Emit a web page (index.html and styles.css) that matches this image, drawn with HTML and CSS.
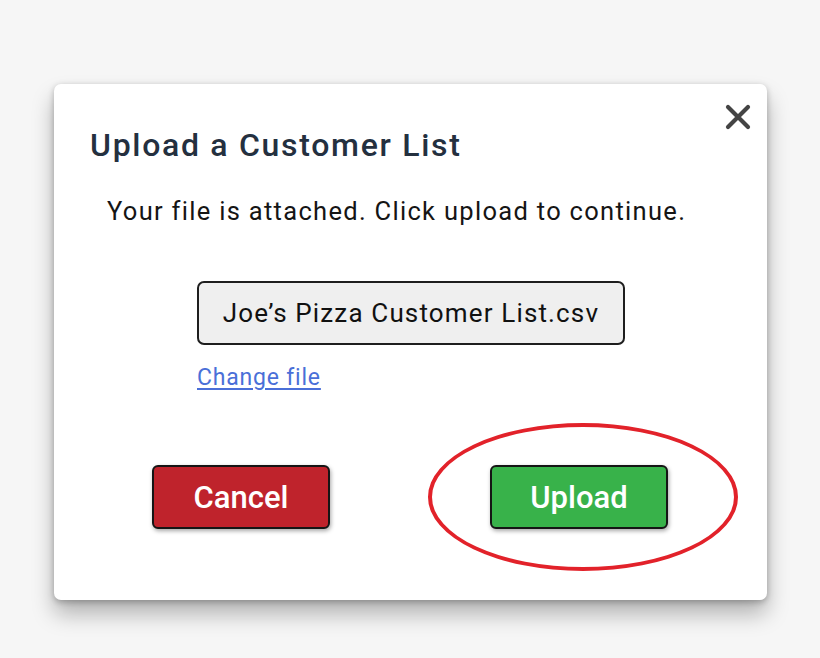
FILE: index.html
```html
<!DOCTYPE html>
<html lang="en">
<head>
<meta charset="utf-8">
<title>Upload a Customer List</title>
<link rel="stylesheet" href="styles.css">
</head>
<body>
<div class="modal">
  <button class="close" aria-label="Close">
    <svg width="28" height="28" viewBox="0 0 28 28"><path d="M4 4 L24 24 M24 4 L4 24" stroke="#444" stroke-width="4.2" stroke-linecap="round" fill="none"/></svg>
  </button>
  <h1 class="title">Upload a Customer List</h1>
  <p class="msg">Your file is attached. Click upload to continue.</p>
  <div class="file-area">
    <div class="file-name">Joe’s Pizza Customer List.csv</div>
    <a class="change" href="#">Change file</a>
  </div>
  <div class="actions">
    <button class="btn cancel">Cancel</button>
    <div class="upload-wrap">
      <button class="btn upload">Upload</button>
      <span class="ring"></span>
    </div>
  </div>
</div>
</body>
</html>
```
FILE: styles.css
```css
html, body {
  margin: 0;
  padding: 0;
}
body {
  background: #f6f6f6;
  width: 820px;
  height: 658px;
  overflow: hidden;
  font-family: Roboto, "Liberation Sans", sans-serif;
  padding-top: 84px;
  padding-left: 54px;
  box-sizing: border-box;
}
.modal {
  position: relative;
  width: 713px;
  height: 516px;
  background: #fff;
  border-radius: 7px;
  box-shadow: 0 14px 22px rgba(0,0,0,0.28), 0 2px 6px rgba(0,0,0,0.25);
  box-sizing: border-box;
  padding: 41px 0 0 36px;
  display: flex;
  flex-direction: column;
}
.close {
  position: absolute;
  top: 19px;
  right: 15px;
  background: none;
  border: 0;
  padding: 0;
  width: 28px;
  height: 28px;
  cursor: pointer;
}
.title {
  margin: 0;
  font-size: 32px;
  font-weight: 500;
  color: #24303f;
  line-height: 40px;
  letter-spacing: 1.7px;
}
.msg {
  margin: 30px 0 0 17px;
  font-size: 25.5px;
  color: #151515;
  line-height: 32px;
  letter-spacing: 1.3px;
}
.file-area {
  margin: 54px 0 0 107px;
  display: flex;
  flex-direction: column;
  align-items: flex-start;
}
.file-name {
  box-sizing: border-box;
  width: 428px;
  height: 64px;
  border: 2px solid #1e1e1e;
  border-radius: 7px;
  background: #efefef;
  font-size: 26px;
  color: #111;
  letter-spacing: 1.15px;
  display: flex;
  align-items: center;
  justify-content: center;
}
.change {
  margin-top: 18px;
  font-size: 23px;
  color: #4a6fd8;
  text-decoration: underline;
  text-underline-offset: 3px;
  line-height: 30px;
  letter-spacing: 0.8px;
}
.actions {
  margin: 72px 0 0 62px;
  display: flex;
  align-items: center;
  gap: 160px;
}
.upload-wrap {
  position: relative;
}
.btn {
  box-sizing: border-box;
  width: 178px;
  height: 64px;
  border: 2px solid #151515;
  border-radius: 6px;
  font-family: Roboto, "Liberation Sans", sans-serif;
  font-size: 31px;
  font-weight: 500;
  color: #fff;
  box-shadow: 1px 2px 4px rgba(0,0,0,0.35);
  cursor: pointer;
  padding: 0;
}
.cancel {
  background: #bf232c;
}
.upload {
  background: #38b24a;
}
.ring {
  position: absolute;
  left: -62px;
  top: -42px;
  width: 310px;
  height: 148px;
  border: 4px solid #e2222a;
  border-radius: 50%;
  box-sizing: border-box;
  pointer-events: none;
}
```
